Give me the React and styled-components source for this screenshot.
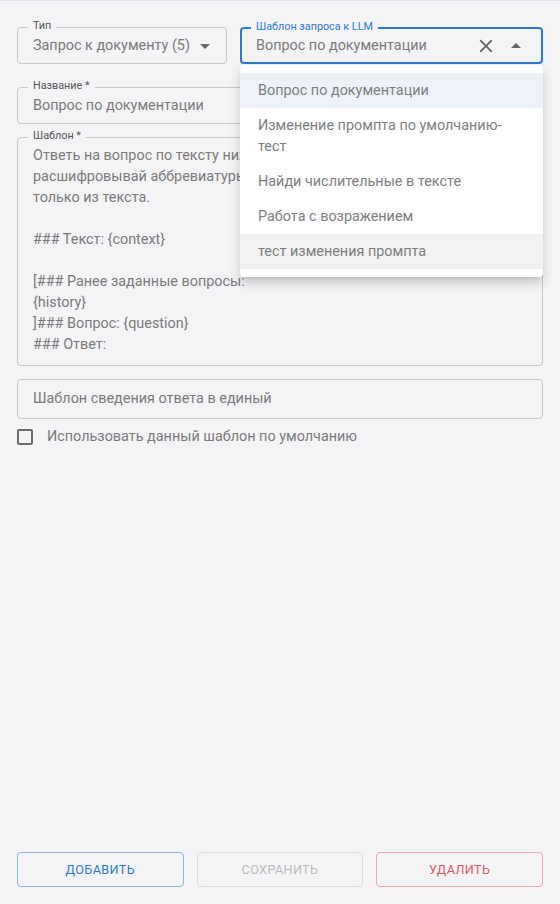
import React from 'react'
import styled, { createGlobalStyle } from 'styled-components'

const GlobalStyle = createGlobalStyle`
    body {
        margin: 0;
        background: #f4f4f7;
        font-family: Roboto, "Noto Sans", sans-serif;
    }
    * { box-sizing: border-box; }
`

const Page = styled.div`
    min-height: 100vh;
    border-top: 1px solid #e4e4e8;
    padding: 26px 17px 17px;
    display: flex;
    flex-direction: column;
`
const TopRow = styled.div`
    display: grid;
    grid-template-columns: 210px 1fr;
    gap: 13px;
    margin-bottom: 23px;
`
const Field = styled.div`
    position: relative;
    height: ${p => p.$height || 37}px;
    border: ${p => p.$focused ? '2px solid #2b7bd6' : '1px solid #c9c9cc'};
    border-radius: 4px;
    display: flex;
    align-items: ${p => p.$multiline ? 'flex-start' : 'center'};
    padding: ${p => p.$focused ? '0 13px 0 14px' : '0 9px 0 15px'};
    margin-bottom: ${p => p.$mb ?? 13}px;
`
const Label = styled.span`
    position: absolute;
    top: -9px;
    left: ${p => p.$focused ? 9 : 10}px;
    padding: 0 5px;
    background: #f4f4f7;
    font-size: 10.8px;
    line-height: 13px;
    color: ${p => p.$focused ? '#2b7bd6' : '#555'};
`
const Value = styled.span`
    flex: 1;
    font-size: 14.4px;
    line-height: 20px;
    color: #7b7b7b;
    white-space: nowrap;
    overflow: hidden;
`
const TextBody = styled.div`
    padding-top: 7px;
    font-size: 14.4px;
    line-height: 21px;
    color: #7b7b7b;
    white-space: pre-wrap;
`
const IconBtn = styled.span`
    display: flex;
    align-items: center;
    justify-content: center;
    width: 24px;
    height: 24px;
    margin-left: ${p => p.$ml || 0}px;
    color: #666;
`
const Popup = styled.div`
    position: absolute;
    top: 36px;
    left: -2px;
    right: -2px;
    z-index: 10;
    background: #fff;
    border-radius: 4px;
    padding: 8px 0;
    box-shadow: 0 5px 5px -3px rgba(0,0,0,0.12), 0 8px 10px 1px rgba(0,0,0,0.08), 0 3px 14px 2px rgba(0,0,0,0.06);
`
const Option = styled.div`
    padding: 7px 18px;
    font-size: 14.4px;
    line-height: 21px;
    color: #7e7e7e;
    background: ${p => p.$selected ? '#edf2f9' : p.$hover ? '#f2f2f3' : 'transparent'};
`
const CheckRow = styled.label`
    display: flex;
    align-items: center;
    gap: 14px;
    font-size: 14.4px;
    color: #7b7b7b;
    margin-top: -2px;
`
const Box = styled.span`
    width: 16px;
    height: 16px;
    border: 2px solid #6b6b6b;
    border-radius: 2px;
`
const Buttons = styled.div`
    margin-top: auto;
    display: grid;
    grid-template-columns: repeat(3, 1fr);
    gap: 13px;
`
const Button = styled.button`
    height: 35px;
    background: transparent;
    border: 1px solid ${p => p.$border};
    border-radius: 4px;
    color: ${p => p.$color};
    font-family: Roboto, sans-serif;
    font-size: 12.6px;
    font-weight: 400;
    letter-spacing: 0.4px;
    text-transform: uppercase;
`

const ArrowDown = () => (
    <svg width="24" height="24" viewBox="0 0 24 24" fill="currentColor"><path d="M7 10l5 5 5-5z" /></svg>
)
const ArrowUp = () => (
    <svg width="24" height="24" viewBox="0 0 24 24" fill="currentColor"><path d="M7 14l5-5 5 5z" /></svg>
)
const Close = () => (
    <svg width="22" height="22" viewBox="0 0 24 24" fill="currentColor"><path d="M19 6.41 17.59 5 12 10.59 6.41 5 5 6.41 10.59 12 5 17.59 6.41 19 12 13.41 17.59 19 19 17.59 13.41 12z" /></svg>
)

const options = [
    'Вопрос по документации',
    'Изменение промпта по умолчанию-тест',
    'Найди числительные в тексте',
    'Работа с возражением',
    'тест изменения промпта',
]

const template = `Ответь на вопрос по тексту ниже. Не придумывай ответ, не
расшифровывай аббревиатуры. Используй сведения
только из текста.

### Текст: {context}

[### Ранее заданные вопросы:
{history}
]### Вопрос: {question}
### Ответ:`

const App = () => {
    return (
        <Page>
            <GlobalStyle />
            <TopRow>
                <Field $mb={0}>
                    <Label>Тип</Label>
                    <Value>Запрос к документу (5)</Value>
                    <IconBtn><ArrowDown /></IconBtn>
                </Field>
                <Field $focused $mb={0}>
                    <Label $focused>Шаблон запроса к LLM</Label>
                    <Value>Вопрос по документации</Value>
                    <IconBtn><Close /></IconBtn>
                    <IconBtn $ml={6}><ArrowUp /></IconBtn>
                    <Popup>
                        {options.map((o, i) => (
                            <Option key={o} $selected={i === 0} $hover={i === 4}>{o}</Option>
                        ))}
                    </Popup>
                </Field>
            </TopRow>
            <Field>
                <Label>Название *</Label>
                <Value>Вопрос по документации</Value>
            </Field>
            <Field $multiline $height={229}>
                <Label>Шаблон *</Label>
                <TextBody>{template}</TextBody>
            </Field>
            <Field $height={40} $mb={11}>
                <Value>Шаблон сведения ответа в единый</Value>
            </Field>
            <CheckRow>
                <Box />
                Использовать данный шаблон по умолчанию
            </CheckRow>
            <Buttons>
                <Button $color="#2a78d4" $border="#8db6ea">Добавить</Button>
                <Button $color="#bcbcbc" $border="#dcdcdf">Сохранить</Button>
                <Button $color="#e0585c" $border="#f0a6a8">Удалить</Button>
            </Buttons>
        </Page>
    )
}

export default App
